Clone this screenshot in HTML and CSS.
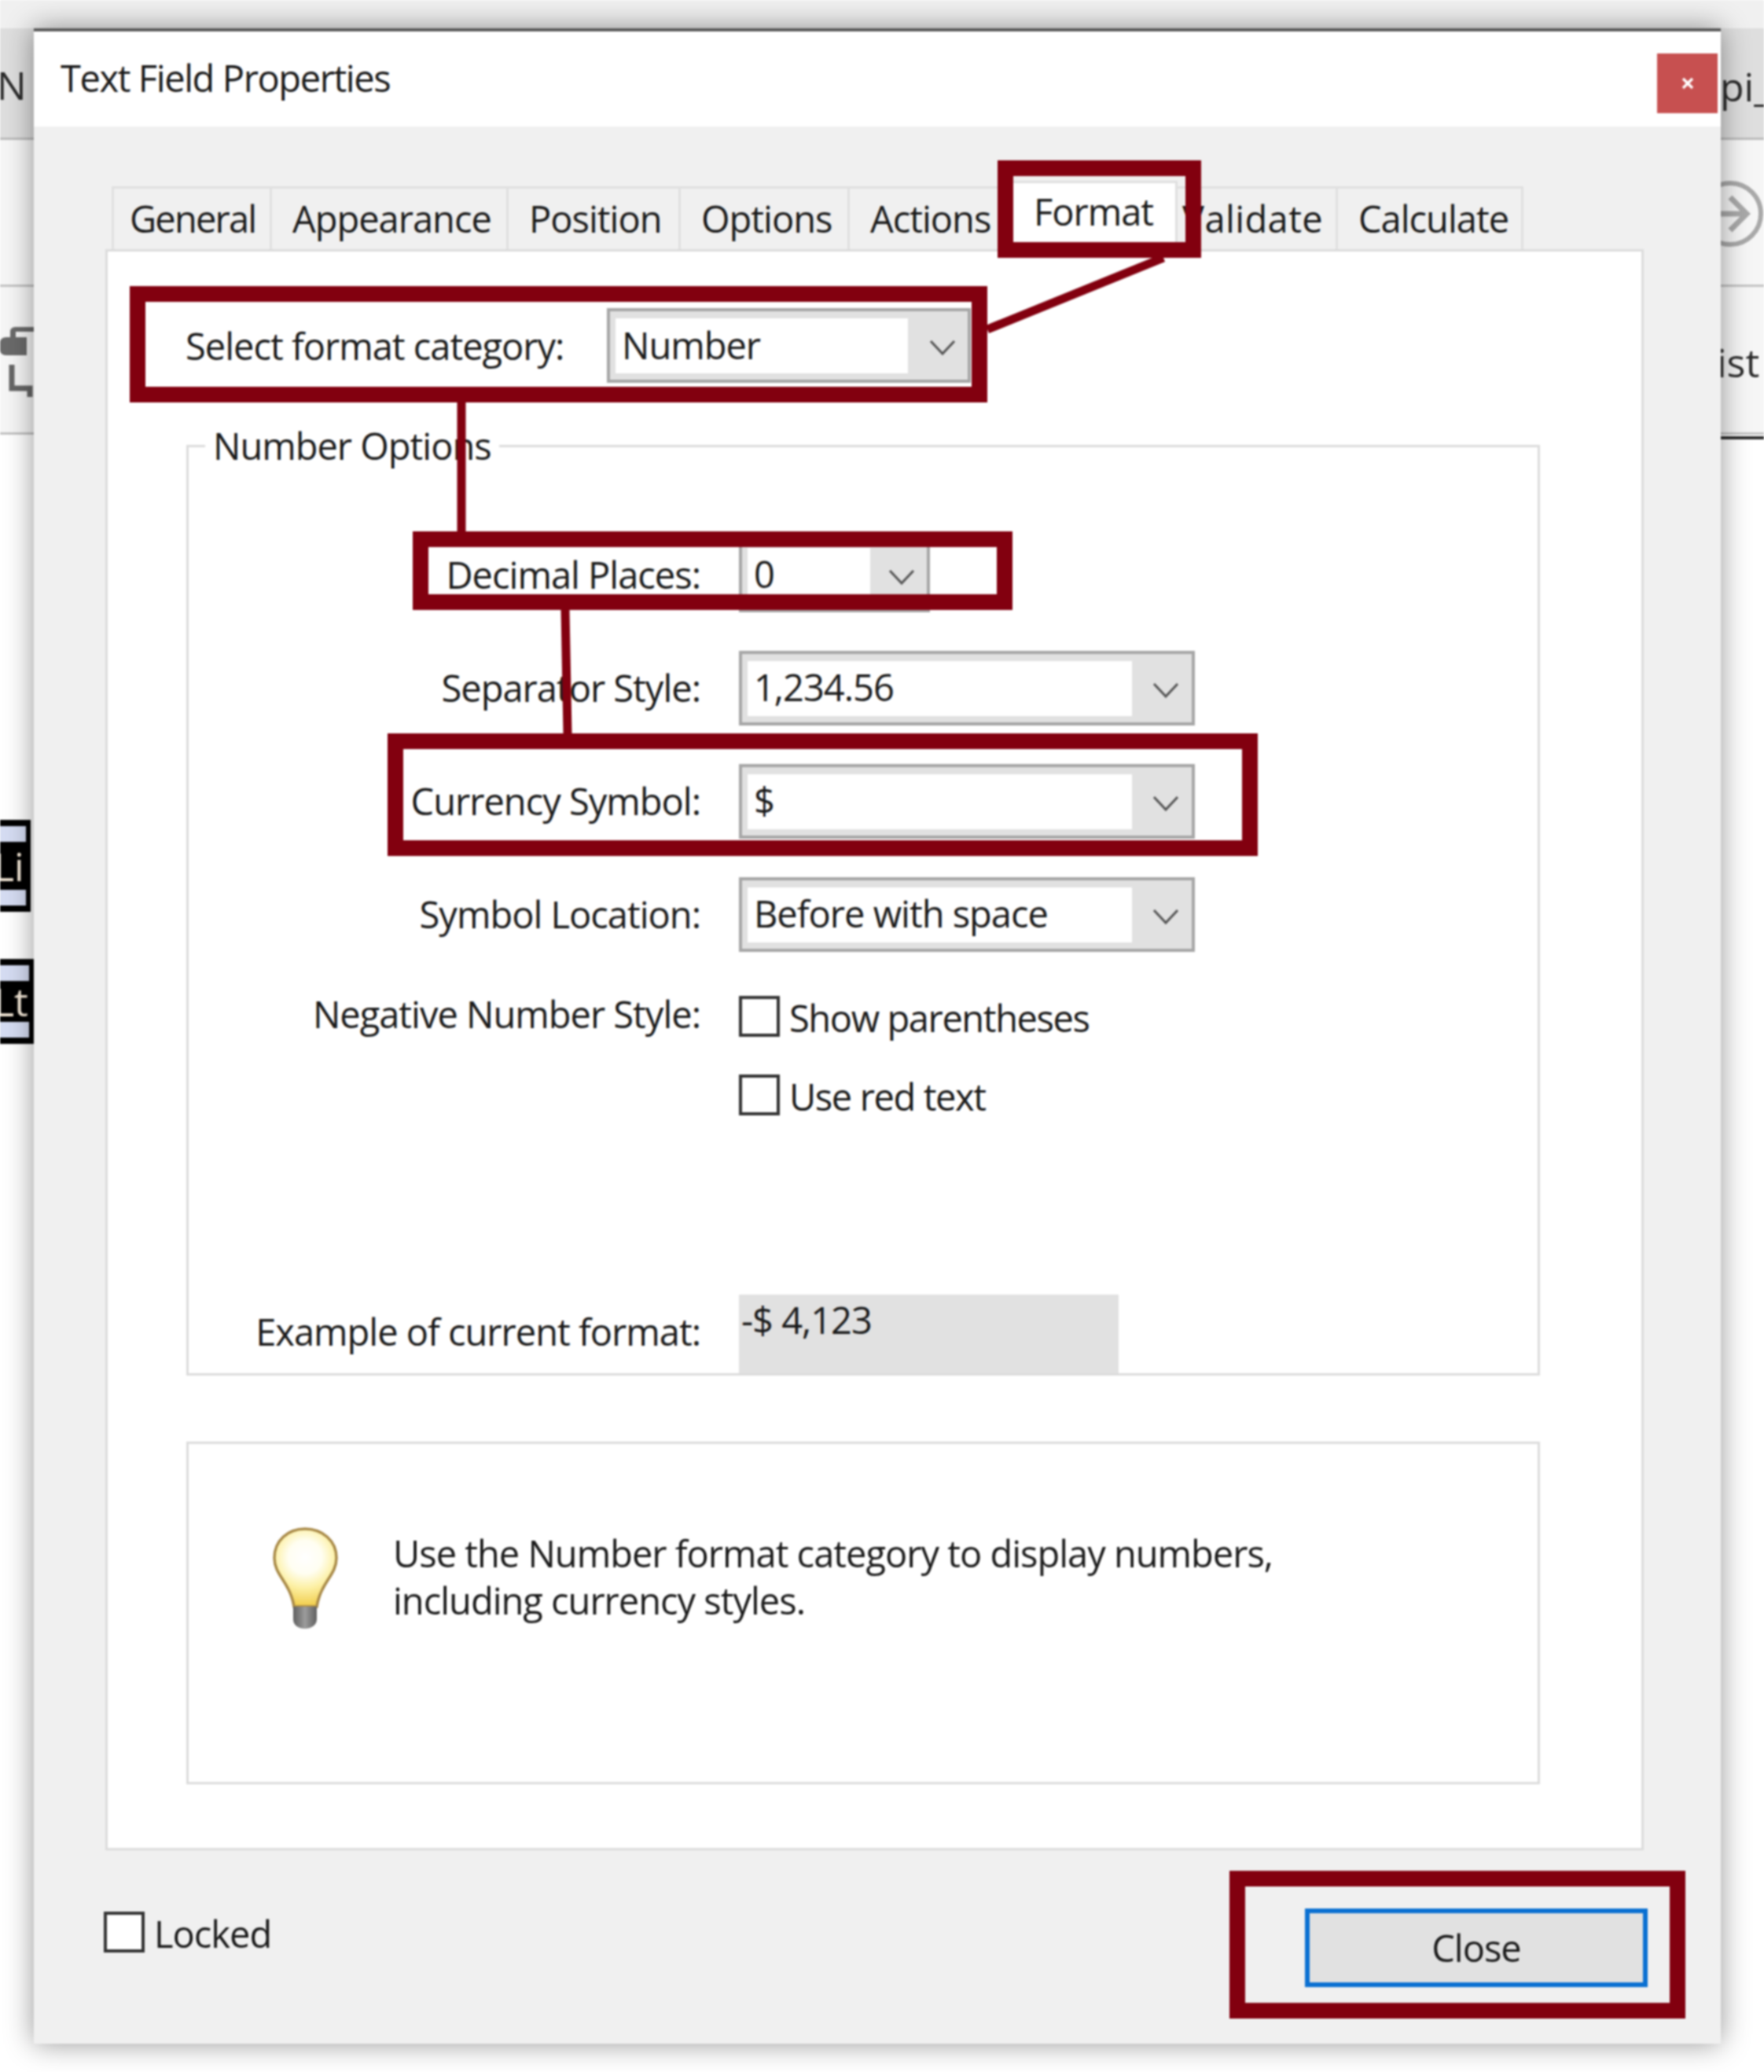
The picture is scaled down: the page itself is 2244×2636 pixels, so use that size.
FILE: index.html
```html
<!DOCTYPE html>
<html lang="en">
<head>
<meta charset="utf-8">
<title>Text Field Properties</title>
<link rel="stylesheet" href="styles.css">
</head>
<body>
<div class="stage">
  <div class="backdrop">
    <div class="band band-top"></div>
    <div class="band band-tool"></div>
    <div class="band band-a"></div>
    <div class="band band-b"></div>
    <span class="frag frag-n">N</span>
    <span class="frag frag-pi">pi_</span>
    <span class="frag frag-ist">ist</span>
    <div class="rule-dark"></div>
    <svg class="frag-lock" viewBox="0 0 44 92"><path d="M0 21C0 17 3 14 8 14H13V7C13 3 16 1 20 1H44V7H20V14H34V37H8C3 37 0 34 0 30Z" fill="#6a6a6a"/><path d="M15 49V79H38V90" fill="none" stroke="#666" stroke-width="7"/></svg>
    <svg class="frag-arrow" viewBox="0 0 56 90"><circle cx="13" cy="45" r="39" fill="none" stroke="#a9a9a9" stroke-width="6"/><path d="M0 45H34M13 24L34 45L13 66" fill="none" stroke="#a9a9a9" stroke-width="7"/></svg>
    <div class="tag tag-one"><i class="tag-bar"></i><b class="tag-text">Li</b><i class="tag-bar"></i></div>
    <div class="tag tag-two"><i class="tag-bar"></i><b class="tag-text">Lt</b><i class="tag-bar"></i></div>
  </div>

  <div class="dialog">
    <header class="titlebar">
      <h1 class="title">Text Field Properties</h1>
      <div class="close-x"><svg viewBox="0 0 18 18" class="close-glyph"><path d="M3 3L15 15M15 3L3 15" stroke="#fff" stroke-width="3.4" fill="none"/></svg></div>
    </header>
    <div class="content">
      <nav class="tabs">
        <div class="tab tab-first">General</div>
        <div class="tab">Appearance</div>
        <div class="tab">Position</div>
        <div class="tab">Options</div>
        <div class="tab">Actions</div>
        <div class="tab tab-active">Format</div>
        <div class="tab tab-validate">Validate</div>
        <div class="tab">Calculate</div>
      </nav>
      <section class="panel">
        <div class="category">
          <label class="category-label">Select format category:</label>
          <div class="combo combo-cat">
            <span class="combo-value">Number</span>
            <span class="combo-btn"><svg class="chev" viewBox="0 0 34 20"><path d="M2 2L17 18L32 2" fill="none" stroke="#555" stroke-width="3"/></svg></span>
          </div>
        </div>
        <div class="group">
          <div class="legend">Number Options</div>
          <div class="row">
            <label class="lbl">Decimal Places:</label>
            <div class="combo combo-dec">
              <span class="combo-value">0</span>
              <span class="combo-btn"><svg class="chev" viewBox="0 0 34 20"><path d="M2 2L17 18L32 2" fill="none" stroke="#555" stroke-width="3"/></svg></span>
            </div>
          </div>
          <div class="row">
            <label class="lbl">Separator Style:</label>
            <div class="combo">
              <span class="combo-value">1,234.56</span>
              <span class="combo-btn"><svg class="chev" viewBox="0 0 34 20"><path d="M2 2L17 18L32 2" fill="none" stroke="#555" stroke-width="3"/></svg></span>
            </div>
          </div>
          <div class="row">
            <label class="lbl">Currency Symbol:</label>
            <div class="combo">
              <span class="combo-value">$</span>
              <span class="combo-btn"><svg class="chev" viewBox="0 0 34 20"><path d="M2 2L17 18L32 2" fill="none" stroke="#555" stroke-width="3"/></svg></span>
            </div>
          </div>
          <div class="row">
            <label class="lbl">Symbol Location:</label>
            <div class="combo">
              <span class="combo-value">Before with space</span>
              <span class="combo-btn"><svg class="chev" viewBox="0 0 34 20"><path d="M2 2L17 18L32 2" fill="none" stroke="#555" stroke-width="3"/></svg></span>
            </div>
          </div>
          <div class="row row-neg">
            <label class="lbl">Negative Number Style:</label>
            <div class="checks">
              <div class="check"><span class="box"></span><span class="check-text">Show parentheses</span></div>
              <div class="check"><span class="box"></span><span class="check-text">Use red text</span></div>
            </div>
          </div>
          <div class="row row-example">
            <label class="lbl lbl-example">Example of current format:</label>
            <div class="example">-$ 4,123</div>
          </div>
        </div>
        <div class="info">
          <svg class="bulb" viewBox="0 0 83 130">
            <defs>
              <radialGradient id="glass" gradientUnits="userSpaceOnUse" cx="41" cy="38" r="70">
                <stop offset="0" stop-color="#fff"/>
                <stop offset=".3" stop-color="#fffef2"/>
                <stop offset=".55" stop-color="#fdf1a8"/>
                <stop offset="1" stop-color="#edc22e"/>
              </radialGradient>
              <linearGradient id="screw" x1="0" x2="1" y1="0" y2="0">
                <stop offset="0" stop-color="#5f5f5f"/>
                <stop offset=".5" stop-color="#9c9c9c"/>
                <stop offset="1" stop-color="#5f5f5f"/>
              </linearGradient>
            </defs>
            <path d="M41 2C63 2 81 17 81 39C81 61 61 70 56 101H27C22 70 2 61 2 39C2 17 19 2 41 2Z" fill="url(#glass)" stroke="#a98a48" stroke-width="3.5"/>
            <path d="M26 101H56V117C56 125 48 129 41 129C33 129 26 125 26 117Z" fill="url(#screw)"/>
          </svg>
          <p class="info-text">Use the Number format category to display numbers,<br>including currency styles.</p>
        </div>
      </section>
      <footer class="bottom">
        <div class="check check-locked"><span class="box"></span><span class="check-text">Locked</span></div>
        <button class="close-btn">Close</button>
      </footer>
    </div>
  </div>

  <svg class="marks" viewBox="0 0 2244 2636">
    <rect x="1279" y="214" width="239" height="104"/>
    <rect x="175" y="374" width="1071" height="128"/>
    <rect x="535" y="686" width="743" height="80"/>
    <rect x="503" y="943" width="1087" height="136"/>
    <rect x="1574" y="2390" width="560" height="168"/>
    <path class="link" d="M1480 328L1256 419"/>
    <path class="link" d="M587 512V676"/>
    <path class="link" d="M719 776L722 933"/>
  </svg>
</div>
</body>
</html>
```
FILE: styles.css
```css
* { box-sizing: border-box; }
html, body { margin: 0; padding: 0; background: #fff; }
body { font-family: "Open Sans", "Noto Sans", "Liberation Sans", sans-serif; color: #1a1a1a; }

.stage {
  position: relative;
  width: 2244px;
  height: 2636px;
  overflow: hidden;
  padding: 36px 55px 36px 43px;
  font-size: 47px;
  letter-spacing: -1px;
  line-height: 60px;
  filter: blur(.8px);
}

/* window behind the dialog */
.backdrop { position: absolute; inset: 0; }
.band-top { height: 36px; background: #f0f0f0; }
.band-tool { height: 142px; background: #dedede; border-bottom: 3px solid #bdbdbd; }
.band-a { height: 187px; background: #f6f6f6; border-bottom: 3px solid #c4c4c4; }
.band-b { height: 188px; background: #f6f6f6; border-bottom: 3px solid #c4c4c4; }
.frag { position: absolute; font-size: 50px; letter-spacing: 0; color: #2b2b2b; line-height: 60px; }
.frag-n { left: -4px; top: 78px; }
.frag-pi { left: 2188px; top: 80px; }
.frag-ist { left: 2184px; top: 431px; }
.rule-dark { position: absolute; left: 2189px; top: 555px; width: 55px; height: 4px; background: #2e2e2e; }
.frag-lock { position: absolute; left: 0; top: 415px; width: 44px; height: 92px; }
.frag-arrow { position: absolute; left: 2188px; top: 227px; width: 56px; height: 90px; }
.tag {
  position: absolute;
  left: 0;
  background: #000;
  display: flex;
  flex-direction: column;
  justify-content: space-between;
  padding: 8px 6px 8px 0;
  overflow: hidden;
}
.tag-one { top: 1043px; width: 39px; height: 117px; }
.tag-two { top: 1220px; width: 43px; height: 108px; }
.tag-bar { display: block; height: 20px; background: #d5dcf2; }
.tag-text { color: #f5e9d8; font-size: 50px; font-weight: 400; letter-spacing: 0; line-height: 50px; margin-left: -8px; }

/* dialog */
.dialog {
  position: relative;
  width: 2146px;
  height: 2564px;
  background: #f0f0f0;
  border-top: 4px solid #5c5c5c;
  box-shadow: 0 0 34px rgba(0, 0, 0, .42);
  display: flex;
  flex-direction: column;
}
.titlebar {
  height: 121px;
  flex: none;
  background: #fff;
  display: flex;
  justify-content: space-between;
  align-items: flex-start;
  padding: 28px 4px 0 34px;
}
.title { margin: 0; font-size: 47px; font-weight: 400; line-height: 62px; letter-spacing: -1.4px; }
.close-x {
  width: 77px;
  height: 76px;
  background: #c75050;
  display: flex;
  align-items: center;
  justify-content: center;
}
.close-glyph { width: 18px; height: 18px; }

.content { flex: 1; padding: 76px 93px 0 89px; display: flex; flex-direction: column; }
.tabs {
  display: grid;
  grid-template-columns: 204px 301px 219px 215px 206px 211px 204px 236px;
  height: 80px;
  margin-left: 10px;
  position: relative;
}
.tab {
  height: 80px;
  background: #f0f0f0;
  border: 3px solid #e0e0e0;
  border-bottom: 0;
  border-left-width: 0;
  padding-left: 26px;
  line-height: 76px;
  white-space: nowrap;
}
.tab-first { border-left-width: 3px; padding-left: 20px; letter-spacing: -1.8px; }
.tab-active {
  background: #fff;
  height: 90px;
  margin-top: -7px;
  padding-left: 0;
  text-align: center;
  line-height: 72px;
}
.tab-validate { padding-left: 6px; letter-spacing: .4px; }

.panel {
  margin: 0 5px 0 2px;
  height: 2037px;
  flex: none;
  background: #fff;
  border: 3px solid #dcdcdc;
  padding: 72px 0 0 100px;
  display: flex;
  flex-direction: column;
}
.category { display: flex; align-items: center; height: 95px; margin-left: -1px; }
.category-label { width: 536px; }
.combo {
  width: 580px;
  height: 95px;
  flex: none;
  display: flex;
  background: #e1e1e1;
  border: 4px solid #a6a6a6;
  padding: 9px 0 8px 7px;
}
.combo-cat { width: 463px; }
.combo-dec { width: 243px; }
.combo-value { flex: 1; background: #fff; padding-left: 8px; line-height: 68px; min-width: 0; }
.group .combo-value { line-height: 66px; }
.combo-btn { width: 76px; flex: none; display: flex; align-items: center; justify-content: center; }
.combo-dec .combo-btn { width: 72px; }
.chev { width: 34px; height: 20px; margin: 3px 0 0 10px; }
.combo-cat .chev { margin-left: 12px; }
.combo-dec .chev { margin-left: 8px; }

.group {
  margin-top: 79px;
  width: 1722px;
  height: 1184px;
  flex: none;
  border: 3px solid #dcdcdc;
  display: flex;
  flex-direction: column;
}
.legend {
  align-self: flex-start;
  margin: -34px 0 85px 21px;
  height: 64px;
  padding: 0 10px;
  line-height: 64px;
  background: #fff;
}
.row { display: grid; grid-template-columns: 651px auto; column-gap: 49px; height: 95px; margin-bottom: 49px; align-items: center; justify-content: start; }
.lbl { text-align: right; margin-top: -2px; }
.row-neg { height: 153px; margin: 7px 0 0; align-items: start; }
.row-neg .lbl { margin-top: -7px; }
.row-example { margin: auto 0 0; height: 100px; align-items: start; }
.row-example .lbl-example { margin-top: 17px; }
.checks { display: flex; flex-direction: column; gap: 48px; }
.check { display: flex; align-items: center; height: 52px; gap: 12px; }
.checks .check-text { letter-spacing: -1.4px; }
.box { width: 52px; height: 52px; flex: none; background: #fff; border: 4px solid #333; }
.check-text { line-height: 52px; margin-top: 4px; }
.example { width: 483px; height: 100px; background: #e1e1e1; padding: 2px 0 0 3px; line-height: 60px; }

.info {
  margin-top: 84px;
  width: 1722px;
  height: 436px;
  flex: none;
  border: 3px solid #dcdcdc;
  display: flex;
  align-items: flex-start;
  padding: 106px 0 0 107px;
  gap: 70px;
}
.bulb { width: 83px; height: 130px; flex: none; }
.info-text { margin: 0; padding-top: 3px; }

.bottom { flex: 1; display: flex; justify-content: space-between; align-items: flex-start; padding-top: 74px; }
.check-locked { margin-top: 4px; }
.close-btn {
  width: 436px;
  height: 100px;
  background: #e1e1e1;
  border: 6px solid #0a70d2;
  border-radius: 0;
  font: inherit;
  letter-spacing: inherit;
  color: inherit;
  padding: 0;
}

.marks { position: absolute; inset: 0; width: 2244px; height: 2636px; }
.marks rect { fill: none; stroke: #82000f; stroke-width: 20; }
.link { fill: none; stroke: #82000f; stroke-width: 11; }
```
